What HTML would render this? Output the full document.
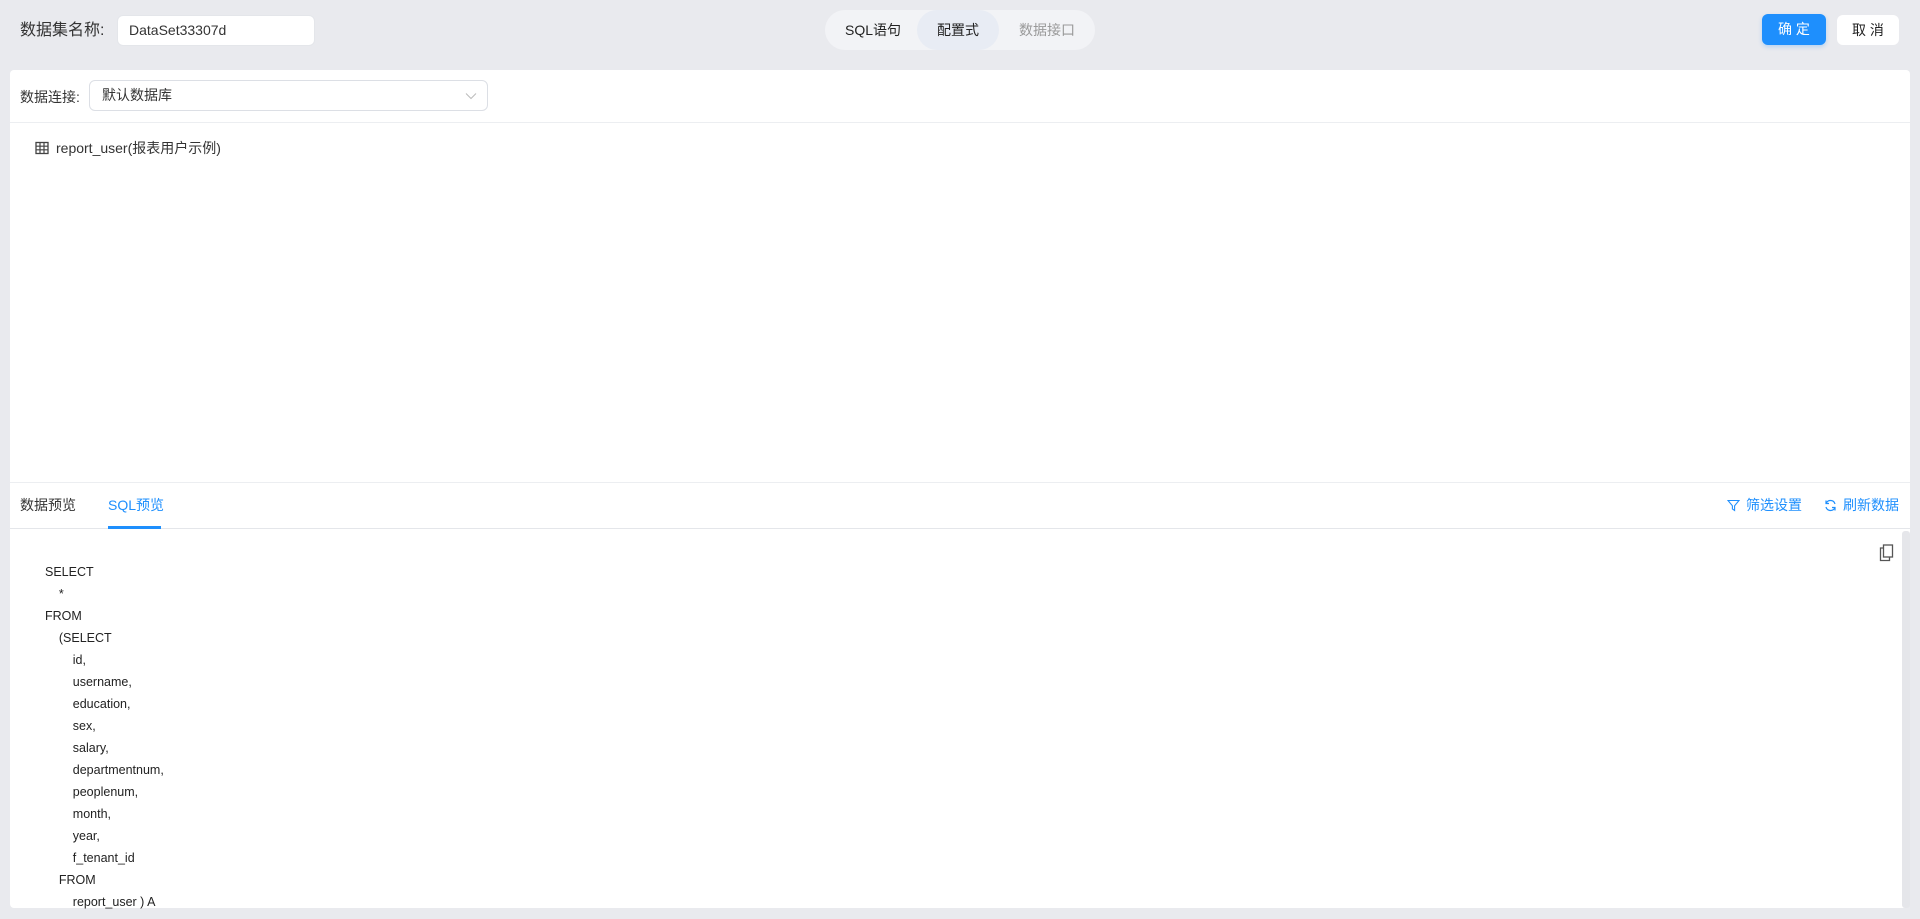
<!DOCTYPE html>
<html><head><meta charset="utf-8"><style>
*{box-sizing:border-box;margin:0;padding:0}
body{width:1920px;height:919px;background:#e9eaee;font-family:"Liberation Sans","Noto Sans CJK SC",sans-serif;font-size:14px;color:#333;position:relative;overflow:hidden}
.abs{position:absolute}
.input{background:#fff;border-radius:6px;border:1px solid #e4e6ea}
</style></head><body>
<div class="abs" style="left:20px;top:21px;font-size:16px;color:#333;line-height:20px">数据集名称:</div>
<div class="abs input" style="left:117px;top:15px;width:198px;height:31px;padding-left:11px;line-height:29px;font-size:14px">DataSet33307d</div>
<div class="abs" style="left:825px;top:10px;width:270px;height:40px;border-radius:20px;background:#f2f3f6"></div>
<div class="abs" style="left:917px;top:10px;width:82px;height:40px;border-radius:20px;background:#e8ecf4"></div>
<div class="abs" style="left:845px;top:21px;line-height:18px;font-size:14px;color:#222">SQL语句</div>
<div class="abs" style="left:937px;top:21px;line-height:18px;font-size:14px;color:#222">配置式</div>
<div class="abs" style="left:1019px;top:21px;line-height:18px;font-size:14px;color:#999">数据接口</div>
<div class="abs" style="left:1762px;top:14px;width:64px;height:31px;border-radius:6px;background:#1e8ffd;color:#fff;text-align:center;line-height:31px;font-size:14px;box-shadow:0 2px 4px rgba(30,143,253,.25)">确 定</div>
<div class="abs" style="left:1837px;top:15px;width:62px;height:30px;border-radius:6px;background:#fff;color:#222;text-align:center;line-height:30px;font-size:14px">取 消</div>
<div class="abs" style="left:10px;top:70px;width:1900px;height:838px;background:#fff;border-radius:4px"></div>
<div class="abs" style="left:20px;top:88px;line-height:18px;font-size:14px;color:#333">数据连接:</div>
<div class="abs input" style="left:89px;top:80px;width:399px;height:31px;padding-left:12px;line-height:29px;font-size:14px;border-color:#dcdfe5">默认数据库
<svg class="abs" style="right:10px;top:10px" width="12" height="10" viewBox="0 0 12 10"><path d="M1 2.5l5 5 5-5" fill="none" stroke="#bbb" stroke-width="1"/></svg></div>
<div class="abs" style="left:10px;top:122px;width:1900px;height:1px;background:#eceef1"></div>
<svg class="abs" style="left:35px;top:141px" width="14" height="14" viewBox="0 0 14 14"><rect x="1" y="1.5" width="12" height="11" fill="none" stroke="#444" stroke-width="1.3"/><path d="M1 5.2h12M1 8.8h12M5 1.5v11M9 1.5v11" stroke="#444" stroke-width="1.2"/></svg>
<div class="abs" style="left:56px;top:139px;line-height:18px;font-size:14px;color:#333">report_user(报表用户示例)</div>
<div class="abs" style="left:10px;top:482px;width:1900px;height:1px;background:#eceef1"></div>
<div class="abs" style="left:20px;top:496px;line-height:18px;font-size:14px;color:#333">数据预览</div>
<div class="abs" style="left:108px;top:496px;line-height:18px;font-size:14px;color:#1e8ffd">SQL预览</div>
<div class="abs" style="left:10px;top:528px;width:1900px;height:1px;background:#e4e6ea"></div>
<div class="abs" style="left:108px;top:526px;width:53px;height:3px;background:#1e8ffd"></div>
<svg class="abs" style="left:1727px;top:499px" width="13" height="13" viewBox="0 0 13 13"><path d="M1 1.5h11L7.6 6.8V11.5L5.4 10V6.8z" fill="none" stroke="#1e8ffd" stroke-width="1.1"/></svg>
<div class="abs" style="left:1746px;top:496px;line-height:18px;font-size:14px;color:#1e8ffd">筛选设置</div>
<svg class="abs" style="left:1824px;top:499px" width="13" height="13" viewBox="0 0 13 13"><path d="M11 5A4.7 4.7 0 0 0 2.3 4M2 8A4.7 4.7 0 0 0 10.7 9" fill="none" stroke="#1e8ffd" stroke-width="1.2"/><path d="M2 1.5v3h3M11 11.5v-3H8" fill="none" stroke="#1e8ffd" stroke-width="1.2"/></svg>
<div class="abs" style="left:1843px;top:496px;line-height:18px;font-size:14px;color:#1e8ffd">刷新数据</div>
<div class="abs" style="left:1902px;top:531px;width:8px;height:377px;background:#e5e6ea;border-radius:3px"></div>
<svg class="abs" style="left:1879px;top:544px" width="15" height="18" viewBox="0 0 15 18"><rect x="4.5" y="1" width="9" height="12" fill="none" stroke="#555" stroke-width="1.3"/><path d="M4.5 4H1.5v12.5h9v-3.5" fill="none" stroke="#555" stroke-width="1.3"/></svg>
<div class="abs" style="left:45px;top:561px;line-height:22px;font-size:12.5px;color:#222;white-space:pre">SELECT
    *
FROM
    (SELECT
        id,
        username,
        education,
        sex,
        salary,
        departmentnum,
        peoplenum,
        month,
        year,
        f_tenant_id
    FROM
        report_user ) A</div>
</body></html>
